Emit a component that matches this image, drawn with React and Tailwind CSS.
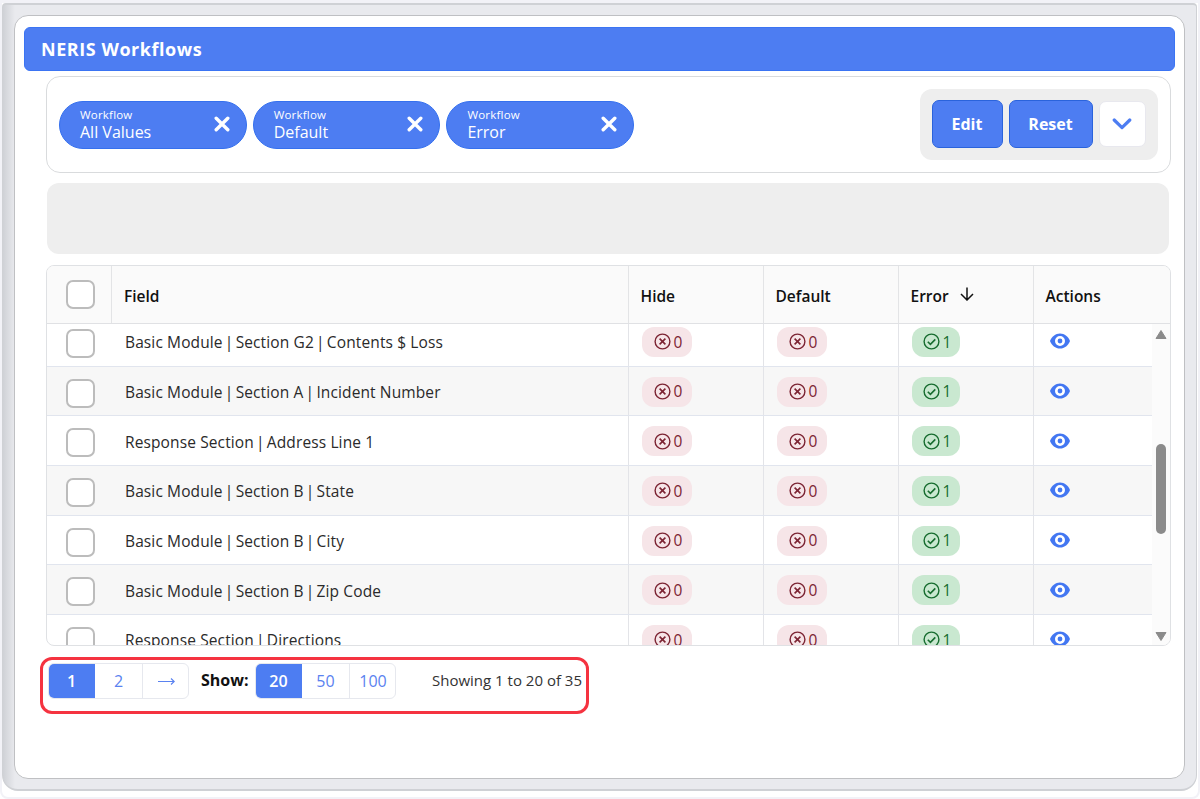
import { Fragment } from 'react'

const filters = [
  { label: 'Workflow', value: 'All Values' },
  { label: 'Workflow', value: 'Default' },
  { label: 'Workflow', value: 'Error' },
]

const rows = [
  ['Basic Module', 'Section G2', 'Contents $ Loss'],
  ['Basic Module', 'Section A', 'Incident Number'],
  ['Response Section', 'Address Line 1'],
  ['Basic Module', 'Section B', 'State'],
  ['Basic Module', 'Section B', 'City'],
  ['Basic Module', 'Section B', 'Zip Code'],
  ['Response Section', 'Directions'],
]

function Checkbox() {
  return <span className="block h-[29px] w-[29px] rounded-[7px] border-2 border-[#bcbcbc] bg-white" />
}

function CloseIcon() {
  return (
    <svg width="16" height="16" viewBox="0 0 16 16" fill="none" stroke="currentColor" strokeWidth="3.4" strokeLinecap="round">
      <path d="M2.2 2.2l11.6 11.6M13.8 2.2L2.2 13.8" />
    </svg>
  )
}

function ChevronIcon() {
  return (
    <svg width="20" height="12" viewBox="0 0 20 12" fill="none" stroke="currentColor" strokeWidth="3.2" strokeLinecap="round" strokeLinejoin="round">
      <path d="M2.2 2l7.8 7.6L17.8 2" />
    </svg>
  )
}

function ArrowRight() {
  return (
    <svg width="17" height="9" viewBox="0 0 17 9" fill="none" stroke="currentColor" strokeWidth="1.1">
      <path d="M0 4.5h16M13 1.500l3.200 3L13 7.500" />
    </svg>
  )
}

function CircleX() {
  return (
    <svg width="17" height="17" viewBox="0 0 17 17" fill="none" stroke="currentColor" strokeWidth="1.4">
      <circle cx="8.5" cy="8.5" r="7.4" />
      <path d="M5.6 5.6l5.8 5.8M11.4 5.6l-5.8 5.8" strokeWidth="1.6" />
    </svg>
  )
}

function CircleCheck() {
  return (
    <svg width="17" height="17" viewBox="0 0 17 17" fill="none" stroke="currentColor" strokeWidth="1.4">
      <circle cx="8.5" cy="8.5" r="7.4" />
      <path d="M4.8 8.8l2.6 2.6 4.9-5" strokeWidth="1.6" />
    </svg>
  )
}

function EyeIcon() {
  return (
    <svg width="20" height="16" viewBox="0 0 20 16">
      <path d="M10 0.4C5.4 0.4 1.6 3.6 0 8c1.6 4.4 5.4 7.6 10 7.6S18.4 12.4 20 8C18.4 3.6 14.6 0.4 10 0.4z" fill="currentColor" />
      <circle cx="10" cy="8" r="3.7" fill="none" stroke="#fff" strokeWidth="2.6" />
    </svg>
  )
}

function NoBadge() {
  return (
    <span className="flex h-[30px] w-[50px] items-center gap-[3px] rounded-xl bg-[#f6e5e8] pl-3 text-[#7c2433]">
      <CircleX />
      <span className="pt-px">0</span>
    </span>
  )
}

function YesBadge() {
  return (
    <span className="flex h-[30px] w-12 items-center gap-[3px] rounded-xl bg-[#c9e8d0] pl-[11px] text-[#176c2f]">
      <CircleCheck />
      <span className="pt-px">1</span>
    </span>
  )
}

function FieldName({ parts }) {
  return (
    <span className="tracking-[0.12px] whitespace-pre">
      {parts.map((part, i) => (
        <Fragment key={part}>
          {i > 0 && <span className="-mx-[2px]"> | </span>}
          {part}
        </Fragment>
      ))}
    </span>
  )
}

function PageGroup({ items }) {
  return (
    <div className="flex h-9 w-[141px] overflow-hidden rounded-md border border-[#e6e8ee] text-base text-[#5a82f0]">
      {items.map((item, i) => (
        <span
          key={i}
          className={
            i === 0
              ? '-my-px -ml-px flex w-[47px] shrink-0 items-center justify-center bg-[#4d7df2] font-semibold text-white'
              : 'flex w-12 shrink-0 items-center justify-center border-r border-[#e6e8ee] last:w-[46px] last:border-r-0'
          }
        >
          {item}
        </span>
      ))}
    </div>
  )
}

export default function App() {
  return (
    <div className="h-[799px] w-[1200px] overflow-hidden rounded-b-lg border-2 border-t-[3px] border-[#f2f2f7] bg-white font-['Open_Sans','Noto_Sans',sans-serif] text-[#222]">
      <div className="h-[788px] w-[1195px] rounded-b-2xl rounded-t-[4px] border border-t-2 border-b-2 border-[#cfd1d5] bg-[linear-gradient(90deg,#cfd1d6,#e9eaee_12px)] px-[11px] pt-[10px]">
        <div className="h-[764px] w-[1171px] rounded-[14px] border border-[#bfc0c3] bg-white px-[9px] pt-[11px]">
          <div className="flex h-11 w-[1151px] items-center rounded-md border border-[#3b74f3] bg-[#4d7df2] px-4 text-lg font-bold tracking-[0.55px] text-white">
            NERIS Workflows
          </div>

          {/* Filters */}
          <div className="mt-[5px] ml-[22px] flex h-[97px] w-[1125px] items-center justify-between rounded-[14px] border-[1.5px] border-[#d9dbdd] px-3">
            <div className="flex gap-[6px]">
              {filters.map(({ label, value }) => (
                <div
                  key={value}
                  className="flex h-12 w-[187.7px] items-center justify-between rounded-full border border-[#3570ee] bg-[#4d7df2] pr-4 pb-px pl-5 text-white"
                >
                  <div>
                    <div className="text-[11.5px] leading-[15px] font-medium tracking-[0.2px]">{label}</div>
                    <div className="text-base leading-5">{value}</div>
                  </div>
                  <CloseIcon />
                </div>
              ))}
            </div>
            <div className="flex h-[71px] w-[238px] items-center gap-[6px] rounded-xl bg-[#eeeeee] pr-3 pb-px pl-[11.5px] text-base font-bold text-white">
              <span className="flex h-12 w-[71px] items-center justify-center rounded-[7px] border border-[#2a63dc] bg-[#4d7df2]">Edit</span>
              <span className="flex h-12 w-[84px] items-center justify-center rounded-[7px] border border-[#2a63dc] bg-[#4d7df2]">Reset</span>
              <span className="flex h-[46px] w-[47px] items-center justify-center rounded-[7px] border border-[#e8e8ee] bg-white text-[#4d7df2]">
                <ChevronIcon />
              </span>
            </div>
          </div>

          <div className="mt-[10px] ml-[23px] h-[71px] w-[1122px] rounded-xl bg-[#eeeeee]" />

          {/* Table */}
          <div className="mt-[11px] ml-[22px] h-[381px] w-[1125px] overflow-hidden rounded-lg border border-[#dfe1e4] text-[15.5px] text-[#2a2a2a]">
            <div className="grid h-[58px] grid-cols-[65px_516.5px_135px_135px_135px_1fr] border-b border-[#e0e1e4] bg-[#fafafa] font-semibold text-[#111]">
              <div className="flex items-center border-r border-[#e3e4e6] pl-[18.5px]"><Checkbox /></div>
              <div className="flex items-center border-r border-[#e3e4e6] pt-1 pl-3">Field</div>
              <div className="flex items-center border-r border-[#e3e4e6] pt-1 pl-3">Hide</div>
              <div className="flex items-center border-r border-[#e3e4e6] pt-1 pl-3">Default</div>
              <div className="flex items-center gap-[11px] border-r border-[#e3e4e6] pt-1 pl-3">
                Error
                <svg width="14" height="14" viewBox="0 0 14 14" fill="none" stroke="currentColor" strokeWidth="1.5" className="-mt-[5px]">
                  <path d="M7 0.5v12.5M1 7l6 6 6-6" />
                </svg>
              </div>
              <div className="flex items-center pt-1 pl-3">Actions</div>
            </div>
            <div className="flex h-[321px] overflow-hidden">
              <div className="-mt-[7px] w-[1105px]">
                {rows.map((parts) => (
                  <div
                    key={parts.join()}
                    className="grid h-[49.7px] grid-cols-[65px_516.5px_135px_135px_135px_1fr] border-b border-[#e1e5ee] even:bg-[#f7f7f7]"
                  >
                    <div className="flex items-center pt-1 pl-[18.5px]"><Checkbox /></div>
                    <div className="flex items-center border-r border-[#e3e4e8] pt-[3px] pl-[13px]"><FieldName parts={parts} /></div>
                    <div className="flex items-center border-r border-[#e3e4e8] pt-px pl-[13px]"><NoBadge /></div>
                    <div className="flex items-center border-r border-[#e3e4e8] pt-px pl-[13px]"><NoBadge /></div>
                    <div className="flex items-center border-r border-[#e3e4e8] pt-px pl-[13px]"><YesBadge /></div>
                    <div className="flex items-center pl-4 text-[#4377f2]"><EyeIcon /></div>
                  </div>
                ))}
              </div>
              <div className="flex flex-1 flex-col items-center bg-[#fbfbfb] pt-[6px] pr-px">
                <svg width="12" height="9" viewBox="0 0 12 9" fill="#8b8b8b"><path d="M6 0.5L11 8.5H1z" stroke="#8b8b8b" strokeLinejoin="round" /></svg>
                <span className="mt-[105px] block h-[90px] w-[10px] rounded-full bg-[#8b8b8b]" />
                <svg width="12" height="9" viewBox="0 0 12 9" fill="#8b8b8b" className="mt-[98px]"><path d="M6 8.5L11 0.5H1z" stroke="#8b8b8b" strokeLinejoin="round" /></svg>
              </div>
            </div>
          </div>

          {/* Pagination */}
          <div className="mt-[11px] ml-4 flex h-[57px] w-[549px] items-start rounded-xl border-[3px] border-[#f53340] pt-[3px] pl-[5px]">
            <PageGroup items={['1', '2', <ArrowRight />]} />
            <span className="w-[66px] pt-[5px] pl-3 text-base font-bold text-[#111]">Show:</span>
            <PageGroup items={['20', '50', '100']} />
            <span className="pt-[6px] pl-9 text-[15px] whitespace-nowrap text-[#333]">Showing 1 to 20 of 35</span>
          </div>
        </div>
      </div>
    </div>
  )
}
